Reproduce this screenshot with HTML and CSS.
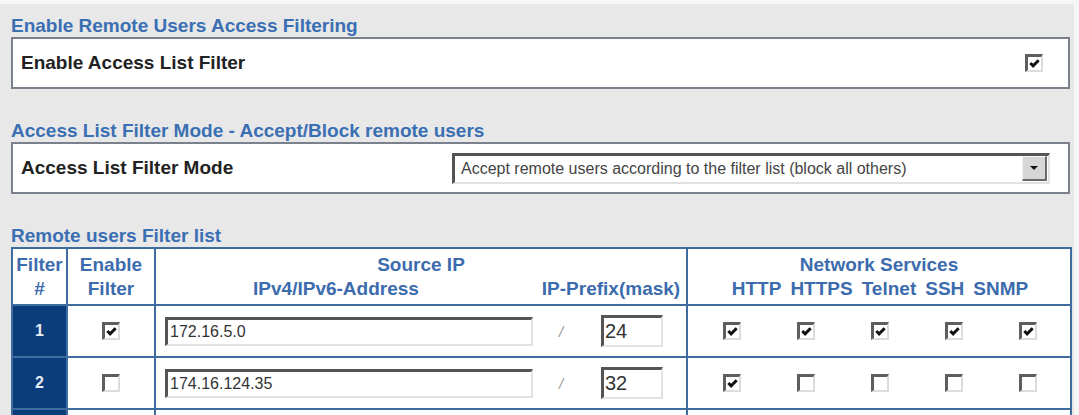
FILE: index.html
```html
<!DOCTYPE html>
<html lang="en">
<head>
  <meta charset="UTF-8" />
  <title>Remote Users Access Filtering</title>
  <link rel="stylesheet" href="styles.css">
</head>
<body>

  <div class="page">
    <h2 class="sec-title">Enable Remote Users Access Filtering</h2>
    <div class="panel">
      <span class="label">Enable Access List Filter</span>
      <span class="cb on panel-cb"><svg viewBox="0 0 14 14"><polyline points="2.5,6.5 5.5,9.5 11.5,3.5"/></svg></span>
    </div>

    <h2 class="sec-title">Access List Filter Mode - Accept/Block remote users</h2>
    <div class="panel">
      <span class="label">Access List Filter Mode</span>
      <div class="select">
        <span class="select-value">Accept remote users according to the filter list (block all others)</span>
        <span class="select-arrow"><svg viewBox="0 0 10 6"><polygon points="1,1 9,1 5,5"/></svg></span>
      </div>
    </div>

    <h2 class="sec-title">Remote users Filter list</h2>
    <table class="filters">
      <colgroup>
        <col class="c-num">
        <col class="c-enable">
        <col class="c-ip">
        <col class="c-svc">
      </colgroup>
      <thead>
        <tr>
          <th>Filter<br>#</th>
          <th>Enable<br>Filter</th>
          <th>
            Source IP
            <div class="sub-head">
              <span class="sub-addr">IPv4/IPv6-Address</span>
              <span class="sub-prefix">IP-Prefix(mask)</span>
            </div>
          </th>
          <th>
            Network Services
            <div class="svc-head">
              <span>HTTP</span><span>HTTPS</span><span>Telnet</span><span>SSH</span><span>SNMP</span>
            </div>
          </th>
        </tr>
      </thead>
      <tbody>
        <tr>
          <td class="num">1</td>
          <td class="center"><span class="cb on"><svg viewBox="0 0 14 14"><polyline points="2.5,6.5 5.5,9.5 11.5,3.5"/></svg></span></td>
          <td>
            <div class="ip-row">
              <input class="ip-addr" type="text" value="172.16.5.0">
              <span class="slash">/</span>
              <input class="ip-prefix" type="text" value="24">
            </div>
          </td>
          <td>
            <div class="svc-row">
              <span class="cb on"><svg viewBox="0 0 14 14"><polyline points="2.5,6.5 5.5,9.5 11.5,3.5"/></svg></span>
              <span class="cb on"><svg viewBox="0 0 14 14"><polyline points="2.5,6.5 5.5,9.5 11.5,3.5"/></svg></span>
              <span class="cb on"><svg viewBox="0 0 14 14"><polyline points="2.5,6.5 5.5,9.5 11.5,3.5"/></svg></span>
              <span class="cb on"><svg viewBox="0 0 14 14"><polyline points="2.5,6.5 5.5,9.5 11.5,3.5"/></svg></span>
              <span class="cb on"><svg viewBox="0 0 14 14"><polyline points="2.5,6.5 5.5,9.5 11.5,3.5"/></svg></span>
            </div>
          </td>
        </tr>
        <tr>
          <td class="num">2</td>
          <td class="center"><span class="cb"></span></td>
          <td>
            <div class="ip-row">
              <input class="ip-addr" type="text" value="174.16.124.35">
              <span class="slash">/</span>
              <input class="ip-prefix" type="text" value="32">
            </div>
          </td>
          <td>
            <div class="svc-row">
              <span class="cb on"><svg viewBox="0 0 14 14"><polyline points="2.5,6.5 5.5,9.5 11.5,3.5"/></svg></span>
              <span class="cb"></span>
              <span class="cb"></span>
              <span class="cb"></span>
              <span class="cb"></span>
            </div>
          </td>
        </tr>
        <tr class="next-row">
          <td class="num"></td>
          <td></td>
          <td></td>
          <td></td>
        </tr>
      </tbody>
    </table>
  </div>

</body>
</html>
```

FILE: styles.css
```css
body {
  margin: 0;
  background: #f6f6f6;
  font-family: "Liberation Sans", Arial, sans-serif;
}

.page {
  width: 1074px;
  margin-top: 4px;
  padding: 11px 4px 0 11px;
  box-sizing: border-box;
  min-height: 420px;
  background: #e8e8e8;
}

.sec-title {
  margin: 0;
  font-size: 19px;
  line-height: 22px;
  font-weight: bold;
  color: #3a6fb3;
}

.panel + .sec-title {
  margin-top: 31px;
}

.panel {
  display: flex;
  align-items: center;
  height: 48px;
  padding: 0 8px;
  border: 2px solid #7a808c;
  background: #fff;
}

.label {
  font-size: 19px;
  font-weight: bold;
  color: #222;
}

/* classic sunken checkbox */
.cb {
  display: inline-block;
  width: 13px;
  height: 13px;
  border-style: solid;
  border-width: 3px 2px 2px 3px;
  border-color: #5e5e5e #dcdcdc #dcdcdc #5e5e5e;
  background: #fff;
  vertical-align: middle;
}

.cb svg {
  display: block;
  width: 13px;
  height: 13px;
}

.cb polyline {
  fill: none;
  stroke: #111;
  stroke-width: 3.2;
}

.panel-cb {
  margin-left: auto;
  margin-right: 17px;
}

.select {
  display: flex;
  align-items: center;
  width: 593px;
  height: 26px;
  margin-left: auto;
  margin-right: 10px;
  border-style: solid;
  border-width: 3px 2px 2px 3px;
  border-color: #555 #e2e2e2 #e2e2e2 #555;
  background: #fff;
}

.select-value {
  flex: 1;
  padding-left: 6px;
  font-size: 16px;
  color: #444;
}

.select-arrow {
  display: flex;
  align-items: center;
  justify-content: center;
  width: 22px;
  height: 22px;
  margin-right: 1px;
  border-style: solid;
  border-width: 1px 2px 2px 1px;
  border-color: #f4f4f4 #6a6a6a #6a6a6a #f4f4f4;
  background: #d6d6d6;
}

.select-arrow svg {
  width: 10px;
  height: 6px;
}

.select-arrow polygon {
  fill: #111;
}

.filters {
  width: 1059px;
  border-collapse: collapse;
  table-layout: fixed;
  background: #fff;
  border: 2px solid #3f6c9e;
}

.c-num { width: 55px; }
.c-enable { width: 88px; }
.c-ip { width: 532px; }
.c-svc { width: 384px; }

.filters th,
.filters td {
  border: 2px solid #3f6c9e;
  padding: 0;
}

.filters th {
  padding: 4px 0 3px;
  font-size: 19px;
  line-height: 24px;
  font-weight: bold;
  color: #3c6cae;
  text-align: center;
  vertical-align: top;
}

.sub-head {
  display: flex;
}

.sub-addr {
  flex: 1;
  padding-right: 20px;
}

.sub-prefix {
  width: 150px;
}

.svc-head {
  display: flex;
  justify-content: center;
  gap: 9px;
  padding-left: 2px;
}

.filters td {
  height: 50px;
}

.num {
  background: #0b3c7c;
  color: #e6ecf5;
  font-size: 16px;
  font-weight: bold;
  text-align: center;
}

.center {
  text-align: center;
}

.ip-row {
  display: flex;
  align-items: center;
  padding-left: 9px;
}

.ip-addr,
.ip-prefix {
  box-sizing: border-box;
  margin: 0;
  border-style: solid;
  border-width: 3px 2px 2px 3px;
  border-color: #555 #e2e2e2 #e2e2e2 #555;
  background: #fff;
  font-family: "Liberation Sans", Arial, sans-serif;
  color: #333;
  outline: none;
}

.ip-addr {
  width: 368px;
  height: 29px;
  padding: 0 2px;
  font-size: 16px;
}

.slash {
  width: 68px;
  padding-left: 26px;
  box-sizing: border-box;
  font-size: 15px;
  font-style: italic;
  color: #999;
}

.ip-prefix {
  width: 62px;
  height: 32px;
  padding: 0 1px;
  font-size: 20px;
}

.svc-row {
  display: grid;
  grid-template-columns: repeat(5, 74px);
  justify-content: center;
  justify-items: center;
  padding-left: 2px;
}
```
